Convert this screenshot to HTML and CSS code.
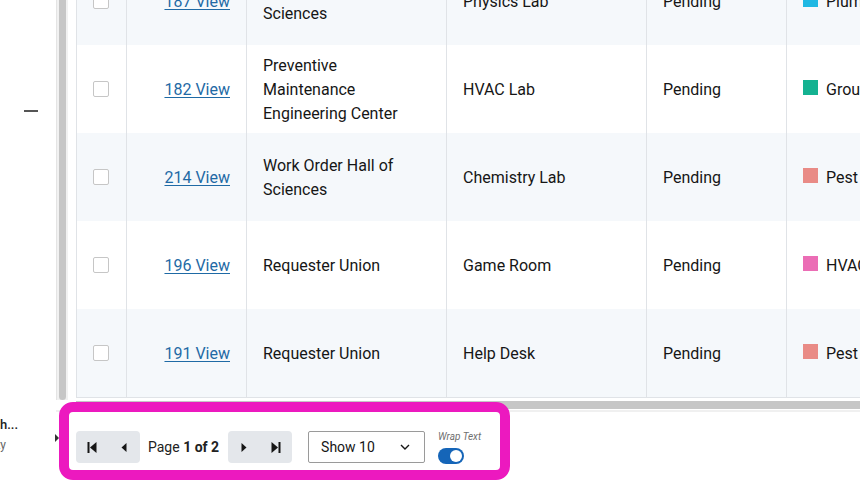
FILE: index.html
```html
<!DOCTYPE html>
<html lang="en">
<head>
    <meta charset="UTF-8">
    <meta name="viewport" content="width=device-width, initial-scale=1.0">
    <title>Work Orders</title>
    <link rel="stylesheet" href="styles.css">
</head>
<body>

<div class="page">
    <aside class="sidebar">
        <div class="collapse-dash"></div>
        <div class="user">
            <div class="user-name">Elizabeth...</div>
            <div class="user-role">Facility</div>
        </div>
        <span class="sidebar-toggle"></span>
    </aside>

    <main class="content">
        <div class="grid-area">
            <div class="vtrack"><div class="vthumb"></div></div>
            <div class="viewport">
                <table class="orders">
                    <colgroup>
                        <col class="c-check"><col class="c-id"><col class="c-building"><col class="c-location"><col class="c-status"><col class="c-type">
                    </colgroup>
                    <tbody>
                        <tr class="striped">
                            <td class="check"><span class="checkbox"></span></td>
                            <td class="num"><a href="#">187 View</a></td>
                            <td>Work Order Hall of Sciences</td>
                            <td>Physics Lab</td>
                            <td>Pending</td>
                            <td class="type"><span class="swatch sw-plumbing"></span>Plumbing</td>
                        </tr>
                        <tr>
                            <td class="check"><span class="checkbox"></span></td>
                            <td class="num"><a href="#">182 View</a></td>
                            <td>Preventive Maintenance Engineering Center</td>
                            <td>HVAC Lab</td>
                            <td>Pending</td>
                            <td class="type"><span class="swatch sw-grounds"></span>Grounds</td>
                        </tr>
                        <tr class="striped">
                            <td class="check"><span class="checkbox"></span></td>
                            <td class="num"><a href="#">214 View</a></td>
                            <td>Work Order Hall of Sciences</td>
                            <td>Chemistry Lab</td>
                            <td>Pending</td>
                            <td class="type"><span class="swatch sw-pest"></span>Pest Control</td>
                        </tr>
                        <tr>
                            <td class="check"><span class="checkbox"></span></td>
                            <td class="num"><a href="#">196 View</a></td>
                            <td>Requester Union</td>
                            <td>Game Room</td>
                            <td>Pending</td>
                            <td class="type"><span class="swatch sw-hvac"></span>HVAC</td>
                        </tr>
                        <tr class="striped">
                            <td class="check"><span class="checkbox"></span></td>
                            <td class="num"><a href="#">191 View</a></td>
                            <td>Requester Union</td>
                            <td>Help Desk</td>
                            <td>Pending</td>
                            <td class="type"><span class="swatch sw-pest"></span>Pest Control</td>
                        </tr>
                    </tbody>
                </table>
            </div>
        </div>

        <div class="htrack"><div class="hthumb"></div></div>

        <div class="pager">
            <div class="btn-group">
                <button class="pg-btn" title="First page">
                    <svg width="10" height="11" viewBox="0 0 10 11"><rect x="0.5" y="0" width="2" height="11" fill="#161616"/><path d="M9.5 0 L3 5.5 L9.5 11 Z" fill="#161616"/></svg>
                </button>
                <button class="pg-btn" title="Previous page">
                    <svg width="6" height="9" viewBox="0 0 6 9"><path d="M5.5 0 L0.5 4.5 L5.5 9 Z" fill="#161616"/></svg>
                </button>
            </div>
            <span class="page-label">Page <b>1 of 2</b></span>
            <div class="btn-group">
                <button class="pg-btn" title="Next page">
                    <svg width="6" height="9" viewBox="0 0 6 9"><path d="M0.5 0 L5.5 4.5 L0.5 9 Z" fill="#161616"/></svg>
                </button>
                <button class="pg-btn" title="Last page">
                    <svg width="10" height="11" viewBox="0 0 10 11"><path d="M0.5 0 L7 5.5 L0.5 11 Z" fill="#161616"/><rect x="7.5" y="0" width="2" height="11" fill="#161616"/></svg>
                </button>
            </div>
            <div class="page-size">
                <span>Show 10</span>
                <svg width="10" height="6" viewBox="0 0 10 6"><path d="M1 1 L5 5 L9 1" fill="none" stroke="#161616" stroke-width="1.4"/></svg>
            </div>
            <div class="wrap-toggle">
                <span class="wrap-label">Wrap Text</span>
                <span class="switch on"><span class="knob"></span></span>
            </div>
        </div>
    </main>

    <div class="highlight"></div>
</div>

</body>
</html>
```

FILE: styles.css
```css
* { box-sizing: border-box; }
html, body { margin: 0; height: 100%; overflow: hidden; }
body { font-family: Roboto, "Liberation Sans", sans-serif; color: #161616; background: #fff; }

.page { position: relative; display: flex; width: 860px; height: 481px; }

/* left nav rail */
.sidebar { position: relative; width: 56px; flex-shrink: 0; display: flex; flex-direction: column; justify-content: space-between; }
.collapse-dash { width: 14px; height: 2px; background: #555; margin: 110px 0 0 24px; }
.user { width: 18px; padding-bottom: 26px; }
.user-name, .user-role { display: flex; justify-content: flex-end; white-space: nowrap; }
.user-name { font-size: 13px; font-weight: 500; color: #222; line-height: 20px; }
.user-role { font-size: 12px; color: #666; line-height: 20px; margin-right: 12px; }
.sidebar-toggle { position: absolute; left: 55px; top: 434px; width: 0; height: 0; border-top: 4px solid transparent; border-bottom: 4px solid transparent; border-left: 4px solid #333; }

.content { flex: 1; display: flex; flex-direction: column; min-width: 0; }

/* table + scrollbars */
.grid-area { display: flex; height: 398px; }
.vtrack { width: 12px; flex-shrink: 0; height: 400px; background: #f1f1f1; border-left: 1px solid #e4e4e4; padding: 0 2px 0 2px; }
.vthumb { width: 7px; height: 400px; background: #c6c6c6; border-radius: 0 0 4px 4px; }
.viewport { flex: 1; overflow: hidden; margin-left: 8px; min-width: 0; }

.orders { border-collapse: collapse; table-layout: fixed; width: 900px; margin-top: -43px; font-size: 16px; line-height: 24px; border-left: 1px solid #e0e3e7; border-bottom: 1px solid #e0e3e7; }
.c-check { width: 50px; }
.c-id { width: 120px; }
.c-building { width: 200px; }
.c-location { width: 200px; }
.c-status { width: 140px; }
.c-type { width: 190px; }
.orders td { height: 88px; padding: 2px 16px 0; border-right: 1px solid #e0e3e7; vertical-align: middle; background: #fff; }
.orders tr.striped td { background: #f5f8fb; }
.orders td.check { padding: 0 0 0 16px; }
.orders td.num { text-align: right; }
.orders a { color: #1f6aa5; text-decoration: underline; text-underline-offset: 2px; }
.orders td.type { white-space: nowrap; }

.checkbox { display: block; width: 16px; height: 16px; border: 1.5px solid #c6c6c6; border-radius: 2px; background: #fff; }
.swatch { display: inline-block; width: 15px; height: 15px; margin-right: 8px; vertical-align: 0; }
.sw-plumbing { background: #1fb8e3; }
.sw-grounds { background: #14b291; }
.sw-pest { background: #e98b86; }
.sw-hvac { background: #eb6db5; }

.htrack { height: 14px; margin-left: 0; padding-top: 3px; border-bottom: 2px solid #f0f0f0; }
.hthumb { height: 8px; background: #c6c6c6; margin-left: 20px; }

/* pagination bar */
.pager { display: flex; align-items: center; padding: 18px 0 0 20px; }
.btn-group { display: flex; background: #e4e7eb; border-radius: 4px; }
.pg-btn { width: 32px; height: 32px; border: none; background: transparent; padding: 0; display: flex; align-items: center; justify-content: center; cursor: pointer; }
.page-label { font-size: 14px; margin: 0 9px 0 8px; color: #222; }
.page-label b { font-weight: 700; }
.page-size { display: flex; align-items: center; justify-content: space-between; width: 117px; height: 32px; margin-left: 16px; padding: 0 14px 0 12px; border: 1px solid #9a9a9a; border-radius: 2px; font-size: 14px; }
.wrap-toggle { display: flex; flex-direction: column; margin-left: 13px; margin-top: 1px; }
.wrap-label { font-size: 10px; font-style: italic; color: #6f6f6f; line-height: 12px; margin-bottom: 5px; }
.switch { position: relative; width: 26px; height: 16px; border-radius: 8px; background: #c6c6c6; }
.switch.on { background: #1565b8; }
.knob { position: absolute; top: 2px; left: 2px; width: 12px; height: 12px; border-radius: 50%; background: #fff; }
.switch.on .knob { left: 12px; }

/* annotation frame over the pager */
.highlight { position: absolute; left: 59px; top: 402px; width: 451px; height: 78px; border: 10px solid #ec19bf; border-radius: 14px; pointer-events: none; }
```
